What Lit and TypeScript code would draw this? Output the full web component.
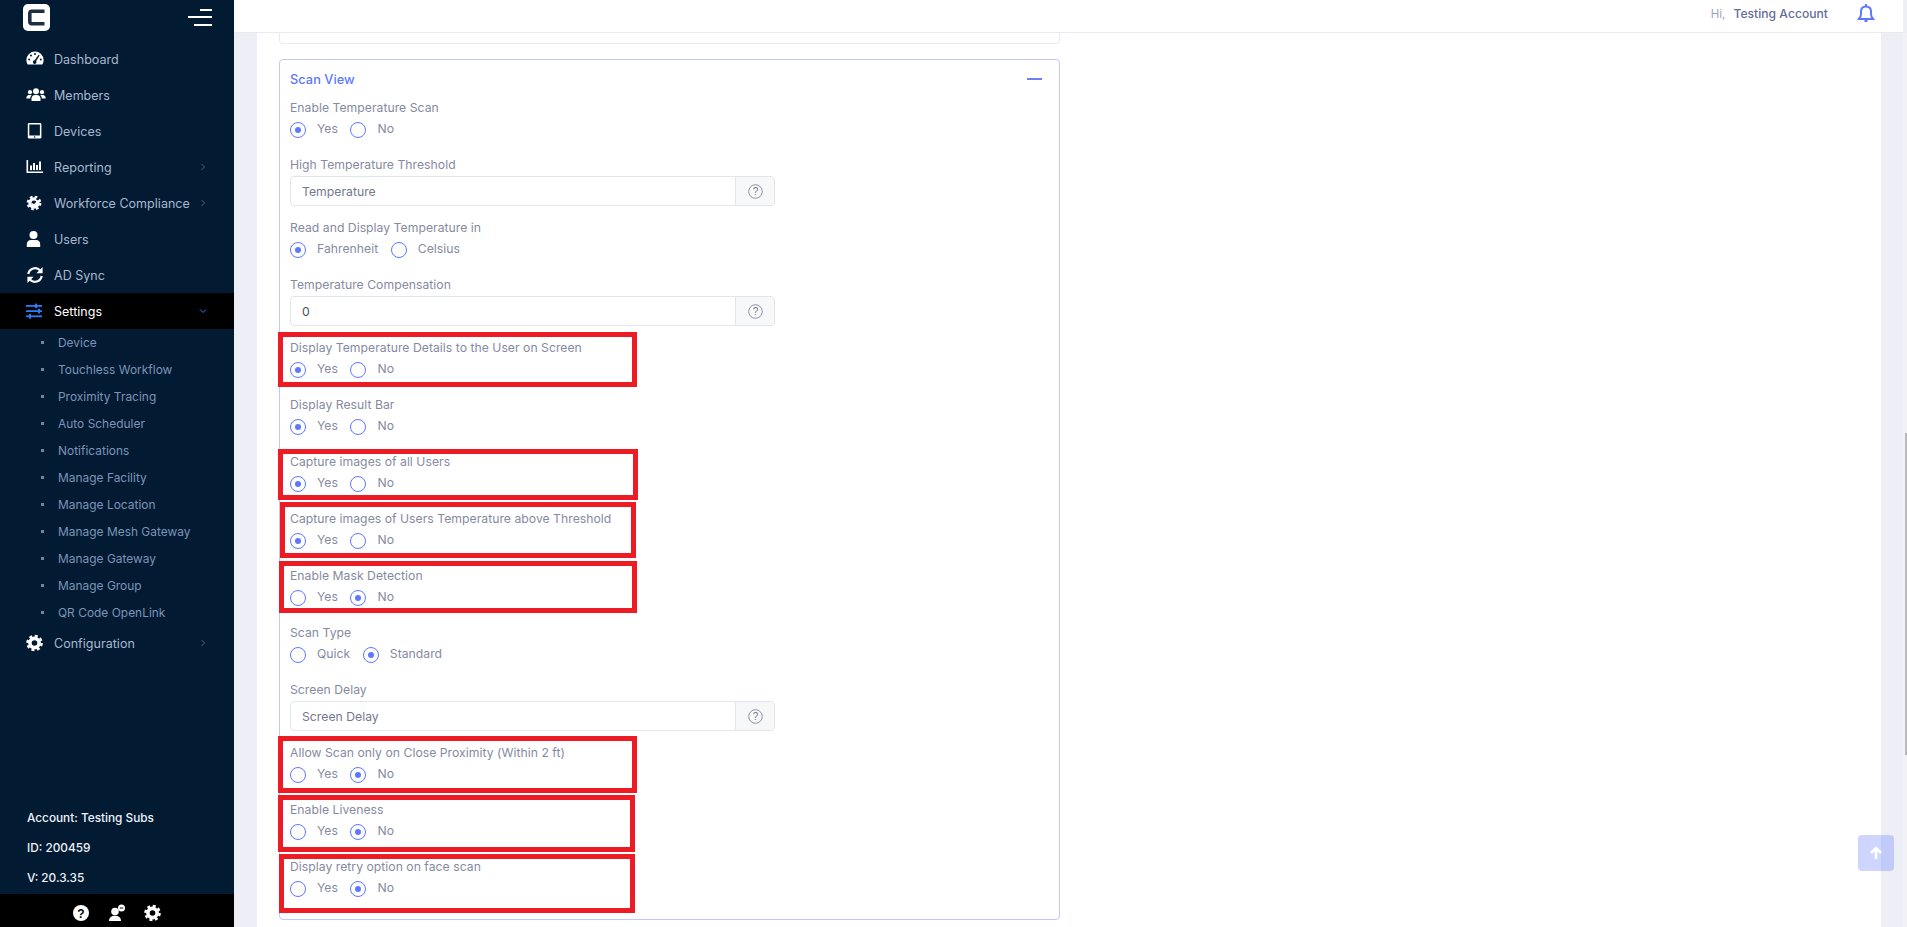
import { LitElement, html, css, svg } from "lit";
import { customElement } from "lit/decorators.js";

const W = "#ffffff";
const BG = "#021b33";

const gearPath = svg`<circle cx="9" cy="9" r="4.6" fill="none" stroke="currentColor" stroke-width="3.6"/><circle cx="9" cy="9" r="7.1" fill="none" stroke="currentColor" stroke-width="2.4" stroke-dasharray="3 2.58"/>`;

const icons: Record<string, unknown> = {
  gauge: svg`<path fill="${W}" d="M9 1.5A8.6 8.6 0 0 0 .4 10c0 1.7.5 3.2 1.3 4.5h14.6c.8-1.3 1.3-2.8 1.3-4.5A8.6 8.6 0 0 0 9 1.5z"/><g fill="${BG}"><circle cx="9" cy="4" r="1"/><circle cx="5" cy="5.5" r="1"/><circle cx="3.2" cy="9.5" r="1"/><circle cx="14.8" cy="9.5" r="1"/><path d="M12.6 4.8l1 .6-3.4 5.6a1.8 1.8 0 1 1-1.6-.8z"/></g>`,
  users: svg`<g fill="${W}"><circle cx="10" cy="5.2" r="3"/><circle cx="4" cy="6.2" r="2.1"/><circle cx="16" cy="6.2" r="2.1"/><path d="M5.5 15v-2.4C5.5 10.5 7 9 9 9h2c2 0 3.5 1.5 3.5 3.6V15z"/><path d="M.3 12.2C.3 10.3 1.5 9 3 9h1.7c.4 0 .7.1 1 .3-1 .8-1.5 2-1.5 3.2H.3zM19.7 12.2c0-1.9-1.2-3.2-2.7-3.2h-1.7c-.4 0-.7.1-1 .3 1 .8 1.5 2 1.5 3.2h3.9z"/></g>`,
  tablet: svg`<rect x="1.8" y="1" width="13.6" height="15.6" rx="1.4" fill="${W}"/><rect x="3.3" y="2.5" width="10.6" height="11" fill="${BG}"/><circle cx="8.6" cy="15" r=".8" fill="${BG}"/>`,
  chart: svg`<g fill="${W}"><path d="M.5 2h1.6v11.4H17V15H.5z"/><rect x="4" y="7.5" width="2" height="4.6"/><rect x="7" y="5" width="2" height="7.1"/><rect x="10" y="7" width="2" height="5.1"/><rect x="13" y="3.5" width="2" height="8.6"/></g>`,
  gearx: svg`<g color="${W}" transform="translate(0 1) scale(.89)">${gearPath}</g><path d="M6 9.5l2 2 3.5-4" fill="none" stroke="${W}" stroke-width="1.6"/><circle cx="11.5" cy="5" r="1.3" fill="${BG}"/>`,
  user: svg`<g fill="${W}"><circle cx="7.5" cy="5" r="4"/><path d="M.8 17v-2.6C.8 11.8 2.5 10 4.9 10h5.2c2.4 0 4.1 1.8 4.1 4.4V17z"/></g>`,
  sync: svg`<g fill="none" stroke="${W}" stroke-width="2.2"><path d="M2.3 8A6.9 6.9 0 0 1 14.2 4.5"/><path d="M15.7 10A6.900 6.900 0 0 1 3.800 13.500"/></g><path fill="${W}" d="M16.600 1v6.200h-6.200zM1.400 17v-6.200h6.200z"/>`,
  sliders: svg`<g fill="#2b7cf5"><rect x="0" y="3" width="16" height="1.8"/><rect x="0" y="8.2" width="16" height="1.8"/><rect x="0" y="13.4" width="16" height="1.8"/><rect x="9" y="1.6" width="2" height="4.6"/><rect x="12" y="6.8" width="2" height="4.6"/><rect x="3" y="12" width="2" height="4.6"/></g>`,
  cog: svg`<g color="${W}" transform="translate(-.5 0)">${gearPath}</g>`,
};

const menuTop = [
  { icon: "gauge", label: "Dashboard" },
  { icon: "users", label: "Members" },
  { icon: "tablet", label: "Devices" },
  { icon: "chart", label: "Reporting", arrow: true },
  { icon: "gearx", label: "Workforce Compliance", arrow: true },
  { icon: "user", label: "Users" },
  { icon: "sync", label: "AD Sync" },
];

const subMenu = [
  "Device",
  "Touchless Workflow",
  "Proximity Tracing",
  "Auto Scheduler",
  "Notifications",
  "Manage Facility",
  "Manage Location",
  "Manage Mesh Gateway",
  "Manage Gateway",
  "Manage Group",
  "QR Code OpenLink",
];

type Field =
  | { kind: "radio"; label: string; options: [string, string]; selected: number }
  | { kind: "input"; label: string; value: string; filled?: boolean };

const fields: Field[] = [
  { kind: "radio", label: "Enable Temperature Scan", options: ["Yes", "No"], selected: 0 },
  { kind: "input", label: "High Temperature Threshold", value: "Temperature" },
  { kind: "radio", label: "Read and Display Temperature in", options: ["Fahrenheit", "Celsius"], selected: 0 },
  { kind: "input", label: "Temperature Compensation", value: "0", filled: true },
  { kind: "radio", label: "Display Temperature Details to the User on Screen", options: ["Yes", "No"], selected: 0 },
  { kind: "radio", label: "Display Result Bar", options: ["Yes", "No"], selected: 0 },
  { kind: "radio", label: "Capture images of all Users", options: ["Yes", "No"], selected: 0 },
  { kind: "radio", label: "Capture images of Users Temperature above Threshold", options: ["Yes", "No"], selected: 0 },
  { kind: "radio", label: "Enable Mask Detection", options: ["Yes", "No"], selected: 1 },
  { kind: "radio", label: "Scan Type", options: ["Quick", "Standard"], selected: 1 },
  { kind: "input", label: "Screen Delay", value: "Screen Delay" },
  { kind: "radio", label: "Allow Scan only on Close Proximity (Within 2 ft)", options: ["Yes", "No"], selected: 1 },
  { kind: "radio", label: "Enable Liveness", options: ["Yes", "No"], selected: 1 },
  { kind: "radio", label: "Display retry option on face scan", options: ["Yes", "No"], selected: 1 },
];

// Red annotation rectangles painted over the form: [left, top, right, bottom] in page pixels.
const marks = [
  [278, 332, 637, 387],
  [278, 449, 638, 500],
  [280, 502, 636, 558],
  [279, 561, 637, 613],
  [278, 736, 637, 793],
  [278, 795, 635, 852],
  [279, 854, 635, 913],
];

@customElement("app-root")
export class AppRoot extends LitElement {
  static styles = css`
    :host {
      display: block;
      width: 1907px;
      height: 927px;
      overflow: hidden;
      position: relative;
      font-family: Inter, "Liberation Sans", sans-serif;
      font-size: 12.2px;
      letter-spacing: 0.03px;
      background: #eeeef6;
    }
    * { box-sizing: border-box; }
    .layout { display: flex; height: 927px; }

    .side { width: 234px; flex: none; background: #021b33; display: flex; flex-direction: column; }
    .brand { height: 41px; flex: none; display: flex; justify-content: space-between; padding: 4px 22px 0 23px; }
    .logo { width: 27px; height: 27px; display: block; }
    .burger { display: flex; flex-direction: column; align-items: flex-end; gap: 5.5px; padding-top: 4.5px; width: 24px; }
    .burger i { display: block; height: 2px; background: #fff; }
    .burger i:nth-child(1) { width: 12px; }
    .burger i:nth-child(2) { width: 24px; }
    .burger i:nth-child(3) { width: 18px; }

    .item { height: 36px; display: flex; align-items: center; padding-left: 26px; color: #a9b8cf; font-size: 12.5px; }
    .item svg.ic { width: 18px; height: 18px; flex: none; margin-right: 10px; overflow: visible; }
    .item .lbl { flex: 1; white-space: nowrap; }
    .item.active { background: #000; color: #fff; }
    .chev { width: 8px; height: 8px; flex: none; margin-right: 27px; fill: none; stroke: #4c617d; stroke-width: 1; }
    .chev.open { stroke: #2b7cf5; }

    .sub { height: 296px; flex: none; }
    .sub div { height: 27px; display: flex; align-items: center; padding-left: 41px; color: #7d93b7; font-size: 11.9px; white-space: nowrap; }
    .sub div::before { content: ""; width: 3px; height: 3px; background: #6f84a6; margin-right: 14px; flex: none; }

    .info { margin-top: auto; padding-left: 27px; padding-bottom: 1px; color: #eef2f8; font-size: 11.8px; font-weight: 500; letter-spacing: 0; }
    .info div { height: 30px; display: flex; align-items: center; white-space: nowrap; }
    .tools { height: 33px; flex: none; background: #000; display: flex; align-items: center; justify-content: center; gap: 18px; padding-top: 5px; color: #fff; }
    .tools svg { width: 18px; height: 18px; display: block; }
    .qtext { font: 700 12px "Liberation Sans", sans-serif; fill: #000; }

    .main { flex: 1; min-width: 0; display: flex; flex-direction: column; }
    .top { height: 33px; flex: none; background: #fff; border-bottom: 1px solid #e9e9f4; margin-right: 4px; display: flex; align-items: flex-start; justify-content: flex-end; padding: 5px 28px 0 0; }
    .hi { color: #a0a4bb; font-size: 11.5px; margin-right: 8px; line-height: 18px; }
    .who { color: #646c9a; font-size: 12.1px; font-weight: 500; line-height: 18px; margin-right: 29px; }
    .bell { width: 18px; height: 20px; margin-top: -2px; fill: none; stroke: #5d78ff; stroke-width: 2; }

    .body { flex: 1; min-height: 0; display: flex; padding-left: 23px; }
    .sheet { width: 1624px; flex: none; background: #fff; padding: 0 22px; }
    .gutter { flex: 1; }
    .track { width: 4px; flex: none; background: #f2f2f6; position: relative; }
    .thumb { position: absolute; right: 0; top: 400px; width: 2.5px; height: 322px; background: #b9b9bd; }

    .stub { width: 781px; height: 11px; border: 1px solid #e9e9f4; border-top: 0; border-radius: 0 0 4px 4px; }
    .card { width: 781px; height: 861px; margin-top: 15px; border: 1px solid #c2c8fb; border-radius: 4px; padding: 0 10px; }
    .head { height: 38px; display: flex; align-items: center; justify-content: space-between; padding-right: 7px; }
    .title { color: #5d78ff; font-size: 12.8px; font-weight: 500; }
    .minus { width: 15px; height: 2px; background: #6f7ffa; }

    .field { color: #868aa0; white-space: nowrap; }
    .label { height: 20px; line-height: 20px; }
    .radio-f { height: 57px; }
    .input-f { height: 63px; }
    .radios { height: 24px; display: flex; align-items: center; }
    .opt { display: flex; align-items: center; margin-right: 12.5px; }
    .opt span.txt { padding-bottom: 4px; }
    .dot { width: 16px; height: 16px; border: 1.3px solid #5d78ff; border-radius: 50%; margin-right: 11px; display: flex; align-items: center; justify-content: center; flex: none; }
    .dot.on::after { content: ""; width: 6px; height: 6px; border-radius: 50%; background: #5d78ff; }
    .group { margin-top: 1px; width: 485px; height: 30px; display: flex; border: 1px solid #e2e5ec; border-radius: 4px; }
    .input { flex: 1; display: flex; align-items: center; padding-left: 11px; color: #74788d; }
    .input.filled { color: #495057; }
    .addon { width: 39px; flex: none; background: #f7f8fa; border-left: 1px solid #e2e5ec; border-radius: 0 3px 3px 0; display: flex; align-items: center; justify-content: center; }
    .addon svg { width: 15px; height: 15px; }
    .help { font: 400 10px "Liberation Sans", sans-serif; fill: #74788d; }

    .mark { position: absolute; border: 5px solid #ed1c24; pointer-events: none; }
    .up { position: absolute; left: 1858px; top: 835px; width: 36px; height: 36px; border-radius: 4px; background: rgba(93, 120, 255, 0.3); display: flex; align-items: center; justify-content: center; }
    .up svg { width: 14px; height: 14px; fill: none; stroke: #fff; stroke-width: 2.6; }
  `;

  private chev(open = false) {
    return html`<svg class="chev ${open ? "open" : ""}" viewBox="0 0 8 8">
      <path d="${open ? "M1 2.5l3 3 3-3" : "M2.5 1l3 3-3 3"}"></path>
    </svg>`;
  }

  private item(icon: string, label: string, arrow: boolean, active = false) {
    return html`<div class="item ${active ? "active" : ""}">
      <svg class="ic" viewBox="0 0 18 18">${icons[icon]}</svg>
      <span class="lbl">${label}</span>
      ${arrow ? this.chev(active) : ""}
    </div>`;
  }

  private field(f: Field) {
    if (f.kind === "radio") {
      return html`<div class="field radio-f">
        <div class="label">${f.label}</div>
        <div class="radios">
          ${f.options.map(
            (o, i) => html`<span class="opt"><span class="dot ${i === f.selected ? "on" : ""}"></span><span class="txt">${o}</span></span>`
          )}
        </div>
      </div>`;
    }
    return html`<div class="field input-f">
      <div class="label">${f.label}</div>
      <div class="group">
        <div class="input ${f.filled ? "filled" : ""}">${f.value}</div>
        <div class="addon">
          <svg viewBox="0 0 15 15">
            <circle cx="7.5" cy="7.5" r="6.8" fill="none" stroke="#74788d" stroke-width=".8"></circle>
            <text class="help" x="7.5" y="11" text-anchor="middle">?</text>
          </svg>
        </div>
      </div>
    </div>`;
  }

  render() {
    return html`
      <div class="layout">
        <aside class="side">
          <div class="brand">
            <svg class="logo" viewBox="0 0 27 27">
              <rect width="27" height="27" rx="5" fill="#fff"></rect>
              <path d="M21.5 7.2H8.5A1.7 1.7 0 0 0 6.8 8.9v9.2A1.7 1.7 0 0 0 8.5 19.8H21.5" fill="none" stroke="#1f2f42" stroke-width="3.6"></path>
            </svg>
            <div class="burger"><i></i><i></i><i></i></div>
          </div>
          ${menuTop.map((m) => this.item(m.icon, m.label, !!m.arrow))}
          ${this.item("sliders", "Settings", true, true)}
          <div class="sub">${subMenu.map((s) => html`<div>${s}</div>`)}</div>
          ${this.item("cog", "Configuration", true)}
          <div class="info">
            <div>Account: Testing Subs</div>
            <div>ID: 200459</div>
            <div>V: 20.3.35</div>
          </div>
          <div class="tools">
            <svg viewBox="0 0 18 18">
              <circle cx="9" cy="9" r="8" fill="#fff"></circle>
              <text class="qtext" x="9" y="13.5" text-anchor="middle">?</text>
            </svg>
            <svg viewBox="0 0 18 18">
              <circle cx="7" cy="7.5" r="3.8" fill="#fff"></circle>
              <path d="M1 17c0-3.5 2.5-5.2 6-5.2s6 1.7 6 5.2z" fill="#fff"></path>
              <circle cx="13.5" cy="4" r="3.5" fill="#fff"></circle>
              <rect x="11.8" y="3.5" width="3.4" height="1" fill="#000"></rect>
            </svg>
            <svg viewBox="0 0 18 18">${icons.cog}</svg>
          </div>
        </aside>
        <div class="main">
          <header class="top">
            <span class="hi">Hi,</span>
            <span class="who">Testing Account</span>
            <svg class="bell" viewBox="0 0 18 20">
              <path d="M2 16c1.2-1.3 2-2.5 2-5V8.5C4 5.5 6 3.5 9 3.5s5 2 5 5V11c0 2.5.8 3.7 2 5z"></path>
              <path d="M9 1v2.5M7.5 18h3M1 16h16"></path>
            </svg>
          </header>
          <div class="body">
            <div class="sheet">
              <div class="stub"></div>
              <section class="card">
                <div class="head"><span class="title">Scan View</span><span class="minus"></span></div>
                ${fields.map((f) => this.field(f))}
              </section>
            </div>
            <div class="gutter"></div>
            <div class="track"><div class="thumb"></div></div>
          </div>
        </div>
      </div>
      ${marks.map(
        ([l, t, r, b]) =>
          html`<div class="mark" style="left:${l}px;top:${t}px;width:${r - l}px;height:${b - t}px"></div>`
      )}
      <div class="up">
        <svg viewBox="0 0 14 14"><path d="M7 13V2M2 7l5-5 5 5"></path></svg>
      </div>
    `;
  }
}
